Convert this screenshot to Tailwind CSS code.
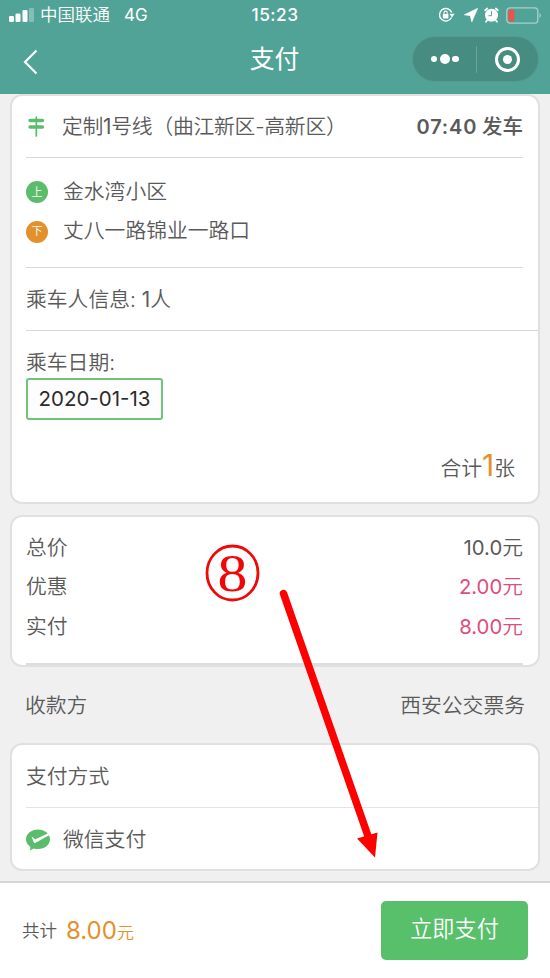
<!DOCTYPE html>
<html lang="zh-CN">
<head>
<meta charset="utf-8">
<title>支付</title>
<script src="https://cdn.jsdelivr.net/npm/@tailwindcss/browser@4"></script>
</head>
<body class="bg-[#f0f0f0]">
<div class="relative flex h-[978px] w-[550px] flex-col overflow-hidden bg-[#f0f0f0] font-['Inter','Noto_Sans_CJK_SC',sans-serif] text-[20.8px] leading-none font-[350] text-[#5a5a5a]">
  <header class="h-[94px] shrink-0 bg-[#51a397] text-white">
    <div class="grid h-[30px] grid-cols-[1fr_auto_1fr] items-center pr-[9px] pl-[9px]">
      <div class="flex items-center text-[17.5px] font-[350]">
        <svg class="mr-[6px] h-[14px] w-[25px]" viewBox="0 0 25 14" fill="#fff"><rect x="0" y="8" width="5" height="6" rx="1.3"/><rect x="6.5" y="5.5" width="5" height="8.5" rx="1.3"/><rect x="13.5" y="2" width="5" height="12" rx="1.3"/><rect x="20" y="0" width="5" height="14" rx="1.3" opacity=".3"/></svg>
        <span>中国联通</span><span class="ml-[14px] text-[17px] font-normal">4G</span>
      </div>
      <div class="text-[17.3px] font-medium tracking-[0.5px]">15:23</div>
      <div class="flex items-center justify-end">
        <svg class="mr-px h-[16px] w-[17px]" viewBox="0 0 17 16"><path d="M13.5 10.5A6.3 6.3 0 1 1 13.7 5.5" fill="none" stroke="#fff" stroke-width="1.4"/><path d="M11.4 6.8h5.2l-2.6 3.8z" fill="#fff"/><rect x="4.8" y="7" width="5.6" height="4.4" rx=".6" fill="#fff"/><path d="M6 7.2V5.7a1.6 1.6 0 0 1 3.2 0v1.5" fill="none" stroke="#fff" stroke-width="1.1"/></svg>
        <svg class="ml-[8px] h-[14px] w-[14px]" viewBox="0 0 14 14"><path d="M13.7.3L.3 6.8l6 .9 1.5 6.3z" fill="#fff" stroke="#fff" stroke-width=".6" stroke-linejoin="round"/></svg>
        <svg class="ml-[6px] h-[17px] w-[15px]" viewBox="0 0 15 17"><circle cx="7.5" cy="8.2" r="6.5" fill="#fff"/><path d="M1.2 3.2L3.2 1.5M13.8 3.2L11.8 1.5M3 13.5l-1 1.3M12 13.5l1 1.3" stroke="#fff" stroke-width="1.8" stroke-linecap="round"/><path d="M7.5 4.2v4.5H4.5" fill="none" stroke="#51a397" stroke-width="1"/></svg>
        <svg class="ml-[7px] h-[17px] w-[35px]" viewBox="0 0 35 17"><rect x=".8" y=".8" width="31" height="15.4" rx="3.2" fill="none" stroke="#fff" stroke-opacity=".5" stroke-width="1.3"/><rect x="2.4" y="2.5" width="6" height="12" rx="1.8" fill="#e9544d"/><path d="M33.5 6v5q1.4-.8 1.4-2.5T33.5 6z" fill="#fff" opacity=".5"/></svg>
      </div>
    </div>
    <div class="grid h-[58px] grid-cols-[1fr_auto_1fr] items-center pr-[11px] pl-[22px]">
      <svg class="mt-[5px] h-[26px] w-[17px]" viewBox="0 0 17 26" fill="none" stroke="#fff" stroke-width="2.2"><path d="M14.5 1.5L3 13l11.5 11.5"/></svg>
      <h1 class="-ml-[12px] text-[24.8px] font-normal">支付</h1>
      <div class="flex h-[46px] w-[127px] items-center justify-self-end rounded-full border border-white/10 bg-[#468c81]">
        <div class="flex flex-1 items-center justify-center gap-[2.5px] pl-px"><i class="size-[6.5px] rounded-full bg-white"></i><i class="size-[10px] rounded-full bg-white"></i><i class="size-[6.5px] rounded-full bg-white"></i></div>
        <div class="h-[27px] w-px bg-white/20"></div>
        <div class="flex flex-1 items-center justify-center"><div class="flex size-[25px] items-center justify-center rounded-full border-[3px] border-white"><i class="size-[9px] rounded-full bg-white"></i></div></div>
      </div>
    </div>
  </header>

  <main class="flex flex-1 flex-col px-[10px]">
    <section class="h-[410px] rounded-[12px] border-2 border-[#e0e0e0] bg-white pl-[14px]">
      <div class="mr-[15px] flex h-[62px] items-center border-b border-[#d8d8d8]">
        <svg class="mr-[17px] ml-[2px] h-[21px] w-[17px]" viewBox="0 0 17 21" fill="none" stroke="#5bbd6b" stroke-linecap="round"><path d="M2 4.5h12.5M2 11h12.5" stroke-width="3.3"/><path d="M8.3 1v19" stroke-width="1.7"/></svg>
        <span class="mt-[2px] tracking-[-0.25px]">定制<span class="font-normal">1</span>号线（曲江新区-高新区）</span>
        <span class="mt-[2px] ml-auto text-[20px] font-semibold tracking-[0.8px]">07:40 <span class="-ml-[1px] text-[20.5px] font-medium tracking-normal">发车</span></span>
      </div>
      <div class="mr-[15px] flex h-[110px] flex-col justify-center border-b border-[#d8d8d8] pb-px">
        <div class="flex h-[39px] items-center"><i class="mr-[15px] flex size-[22px] items-center justify-center rounded-full bg-[#5bbd6b] text-[11px] text-white not-italic">上</i>金水湾小区</div>
        <div class="flex h-[40px] items-center"><i class="mr-[15px] flex size-[22px] items-center justify-center rounded-full bg-[#e2912c] text-[11px] text-white not-italic">下</i>丈八一路锦业一路口</div>
      </div>
      <div class="flex h-[63px] items-center border-b border-[#d8d8d8] pt-[3px]"><span>乘车人信息: <span class="font-normal">1</span>人</span></div>
      <div class="pt-[22px]">乘车日期:</div>
      <div class="mt-[4px] flex h-[42px] w-[137px] items-center justify-center rounded-[3px] border-2 border-[#6fc47c] bg-[#fdfdfd] pt-px text-[20.5px] font-normal text-[#2b2b2b]">2020-01-13</div>
      <div class="mt-[30px] mr-[23px] flex items-baseline justify-end"><span>合计</span><span class="text-[30px] font-normal text-[#e2912c]">1</span><span>张</span></div>
    </section>

    <section class="mt-[11px] h-[152px] rounded-[12px] border-2 border-[#e0e0e0] bg-white pt-[11px] pr-[15px] pl-[14px]">
      <div class="flex h-[40px] items-center justify-between"><span>总价</span><span><span class="text-[20.3px] font-normal">10.0</span>元</span></div>
      <div class="flex h-[39px] items-center justify-between"><span>优惠</span><span class="text-[#df4c7e]"><span class="text-[20.3px] font-normal">2.00</span>元</span></div>
      <div class="flex h-[40px] items-center justify-between"><span>实付</span><span class="text-[#df4c7e]"><span class="text-[20.3px] font-normal">8.00</span>元</span></div>
      <div class="mt-[16px] h-[2px] bg-[#dedede]"></div>
    </section>

    <div class="flex h-[76px] items-center justify-between pt-[2px] pr-[15px] pl-[15px]"><span>收款方</span><span>西安公交票务</span></div>

    <section class="h-[128px] rounded-[12px] border-2 border-[#e0e0e0] bg-white pl-[14px]">
      <div class="flex h-[63px] items-center border-b border-[#e4e4e4] pt-[2px]">支付方式</div>
      <div class="flex h-[62px] items-center pt-[2px]">
        <svg class="mr-[13px] h-[22px] w-[24px]" viewBox="0 0 24 22"><path d="M12 .5C5.4.5 0 4.8 0 10.3c0 3.1 1.7 5.8 4.4 7.6L4 21.6l3.8-2.1c1.3.4 2.7.6 4.2.6 6.6 0 12-4.3 12-9.8S18.6.5 12 .5z" fill="#5bbd6b"/><path d="M5.6 7.5l3.2 2.5q.6.4 1.3.1L22.2 4.200 23.500 6 9.500 13.800q-1.300.7-1.900-.7z" fill="#fff"/></svg>
        <span>微信支付</span>
      </div>
    </section>
  </main>

  <footer class="flex h-[97px] shrink-0 items-center border-t-2 border-[#d6d6d6] bg-white pr-[22px] pb-px pl-[22px]">
    <span class="pt-[2px] text-[17.5px]">共计</span>
    <span class="ml-[9px] flex items-baseline pt-px text-[24px] text-[#e2912c]"><span class="font-normal">8.00</span><span class="text-[17px]">元</span></span>
    <button class="ml-auto h-[59px] w-[147px] rounded-[5px] bg-[#58c06a] pb-[2px] text-[22.2px] font-[350] text-white">立即支付</button>
  </footer>

  <svg class="pointer-events-none absolute inset-0 h-[978px] w-[550px]" viewBox="0 0 550 978">
    <ellipse cx="232.5" cy="573" rx="25.5" ry="27" fill="none" stroke="#f00808" stroke-width="2.8"/>
    <text transform="translate(232.5 590.5) scale(1.15 1)" text-anchor="middle" font-family="'Liberation Serif',serif" font-size="52" font-weight="400" fill="#f00808">8</text>
    <path d="M283.5 593.5L368 836" stroke="#f00" stroke-width="7.5" stroke-linecap="round"/>
    <path d="M357 838.5L377.5 832.5 375 857.5z" fill="#f00"/>
  </svg>
</div>
</body>
</html>
